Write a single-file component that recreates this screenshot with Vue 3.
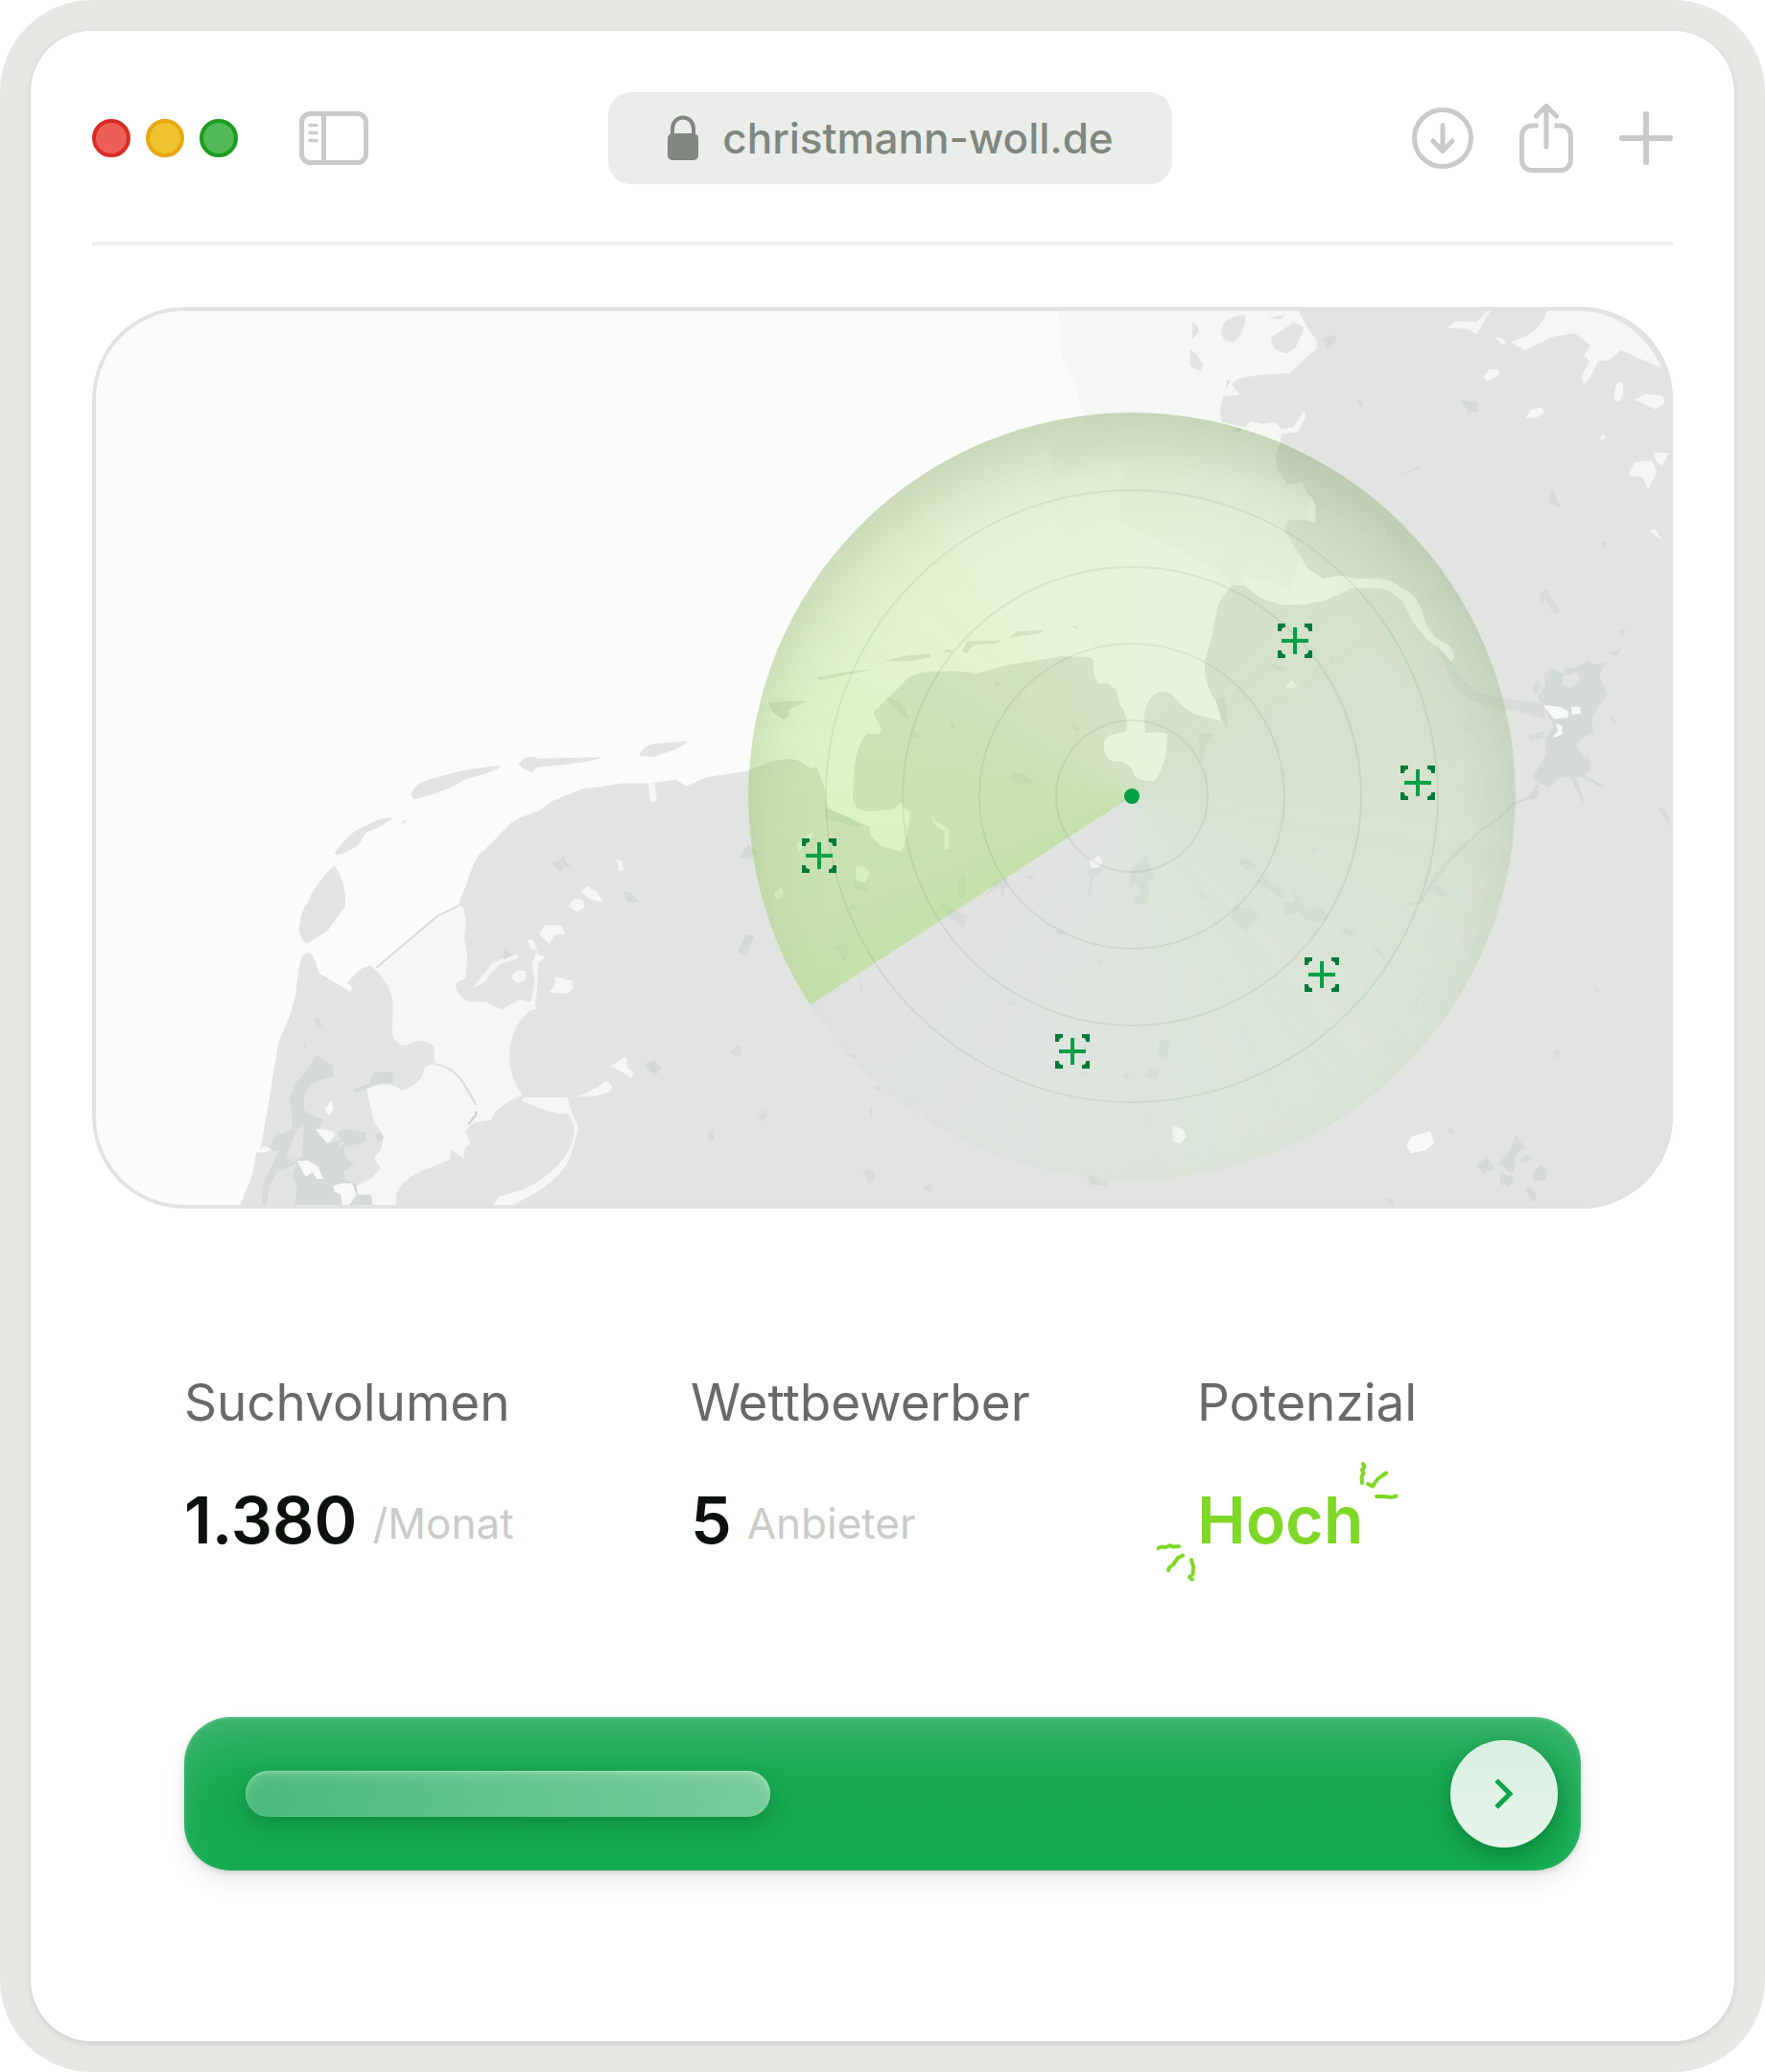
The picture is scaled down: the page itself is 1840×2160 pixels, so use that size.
<script setup>
import { ref } from 'vue'

const address = ref('christmann-woll.de')

const lights = [
    { name: 'Schließen', color: 'red' },
    { name: 'Minimieren', color: 'yellow' },
    { name: 'Maximieren', color: 'green' }
]

const rings = [80, 160, 240, 320]

const competitors = [
    { x: 854, y: 892 },
    { x: 1118, y: 1096 },
    { x: 1350, y: 668 },
    { x: 1478, y: 816 },
    { x: 1378, y: 1016 }
]

const stats = [
    { label: 'Suchvolumen', value: '1.380', unit: '/Monat' },
    { label: 'Wettbewerber', value: '5', unit: 'Anbieter' },
    { label: 'Potenzial', value: 'Hoch', highlight: true }
]
</script>

<template>
    <div class="frame">
        <main class="window">
            <header class="toolbar">
                <div class="toolbar-left">
                    <div class="lights">
                        <button v-for="light in lights" :key="light.color" type="button" class="light"
                            :class="light.color" :aria-label="light.name"></button>
                    </div>
                    <button type="button" class="tool" aria-label="Seitenleiste">
                        <svg width="72" height="56" viewBox="0 0 72 56" fill="none" stroke="currentColor"
                            stroke-width="5">
                            <rect x="2.5" y="2.5" width="67" height="51" rx="9" />
                            <path d="M25.5 3v50" />
                            <path d="M11 14.5h7M11 22.5h7M11 30.5h7" stroke-width="3.5" stroke-linecap="round" />
                        </svg>
                    </button>
                </div>

                <label class="address">
                    <svg width="34" height="48" viewBox="0 0 34 48" aria-hidden="true">
                        <path d="M6 21V14a11 11.5 0 0 1 22 0v7" fill="none" stroke="currentColor" stroke-width="4" />
                        <rect x="1" y="19" width="32" height="28" rx="5" fill="currentColor" />
                    </svg>
                    <input v-model="address" type="text" aria-label="Adresse" spellcheck="false">
                </label>

                <div class="tools">
                    <button type="button" class="tool" aria-label="Downloads">
                        <svg width="64" height="64" viewBox="0 0 64 64" fill="none" stroke="currentColor"
                            stroke-width="5" stroke-linecap="round" stroke-linejoin="round">
                            <circle cx="32" cy="32" r="29.5" />
                            <path d="M32 18.5V45M22 35l10 10.500L42 35" />
                        </svg>
                    </button>
                    <button type="button" class="tool" aria-label="Teilen">
                        <svg width="56" height="72" viewBox="0 0 56 72" fill="none" stroke="currentColor"
                            stroke-width="5" stroke-linejoin="round">
                            <path d="M19.5 23H13a10.500 10.500 0 0 0-10.500 10.500V59A10.500 10.500 0 0 0 13 69.500h30A10.500 10.500 0 0 0 53.500 59V33.500A10.500 10.500 0 0 0 43 23h-6.500" />
                            <path d="M28 4v41M17.500 13L28 2.500 38.500 13" stroke-linecap="round" />
                        </svg>
                    </button>
                    <button type="button" class="tool" aria-label="Neuer Tab">
                        <svg width="56" height="56" viewBox="0 0 56 56" fill="none" stroke="currentColor"
                            stroke-width="6" stroke-linecap="round">
                            <path d="M28 3v50M3 28h50" />
                        </svg>
                    </button>
                </div>
            </header>

            <section class="map" aria-label="Karte">
                <svg class="map-canvas" viewBox="96 320 1648 940">
                    <rect class="sea" x="96" y="320" width="1648" height="940" />

                    <!-- coastal water, mainland -->
                    <g transform="translate(760 400) scale(0.333333)">
                        <path class="water"
                            d="M1032-250L1038-90 1077-10 1110 100 1130 170 1040 182 1000 210 1010 270 1060 295 1140 240 1250 250 1220 320 1225 430 1300 470 1390 510 1500 570 1760 640 1950-250Z" />
                        <path class="land"
                            d="M-20 1225L60 1212Q140 1173 195 1173 225 1178 255 1203L275 1200 300 1270 305 1315Q330 1355 375 1357L440 1385 443 1415 475 1445 540 1465 557 1410 568 1340 553 1336 540 1308 515 1332 430 1337Q387 1330 387 1290L392 1200Q400 1130 430 1095L470 1095 477 1080 450 1030 500 980 560 920Q590 900 640 900 740 896 770 908L870 880 1040 853 1130 855 1140 870V905L1155 940 1180 935Q1205 945 1215 970L1222 1005 1232 1015Q1248 1050 1242 1087L1190 1100Q1170 1110 1172 1140 1180 1170 1195 1180L1230 1183Q1265 1200 1267 1225 1285 1247 1330 1242 1372 1190 1370 1095 1340 1085 1302 1093L1298 1040Q1310 965 1360 962 1390 965 1405 995 1440 1035 1500 1045L1540 1055 1548 1045Q1540 1010 1510 975 1480 910 1490 860L1508 800 1529 690 1571 630H1610L1663 670 1728 692 1806 690 1871 675 1949 640H2040Q2080 650 2105 680L2137 740 2183 800 2241 845 2254 875 2270 855 2254 820 2209 795 2183 760 2163 700Q2140 650 2105 640 2060 608 2033 610L1968 610 1910 600 1858 610 1812 580 1741 465 1734 445 1754 427H1806L1834 435V370L1806 340 1793 310 1747 315 1715 270 1708 230 1721 180V155L1610 135 1565 125 1541 120 1536 80 1545 40 1597 35 1571 0 1597-17 1663-28 1754-33 1793-70 1838-110V-135L1812-170 1793-205 1767-250H2960V2600H-20Z" />
                        <path class="land"
                            d="M122 997Q200 990 245 993L215 1005 185 1020 188 1042 170 1050 140 1030ZM272 918L380 899 455 893 380 908 285 928ZM483 867L560 850 632 844 630 856 560 868ZM665 838L690 830 700 842ZM730 835L745 805 850 803 840 812 765 817 742 845ZM876 795L900 775 984 770 975 780ZM1068 760L1090 758 1092 768Z" />
                        <path class="water"
                            d="M628 1342L645 1365 688 1392V1455L675 1458 673 1400 640 1378ZM245 1412L265 1395 258 1420 215 1465 212 1440ZM395 1510L430 1512 440 1530 425 1562 398 1550ZM140 1595L165 1572 172 1600 150 1613Z" />
                        <path class="town"
                            d="M490 980Q545 985 565 1050 525 1035 490 980ZM570 1085L600 1105 580 1112ZM690 1060L708 1070 698 1085ZM828 930L848 935 838 948ZM1068 1062L1100 1080 1085 1085ZM875 1232Q915 1200 955 1250L905 1250ZM300 1325L375 1357 412 1380 395 1387 300 1360ZM1475 1095L1515 1095 1490 1130 1478 1190ZM1520 985L1552 980 1560 1080 1540 1050Z" />
                    </g>

                    <!-- western coast, lakes and islands -->
                    <g transform="translate(80 700) scale(0.459184 0.369898)">
                        <path class="water" d="M680 842L820 690 865 660 900 700 1000 900 1060 950 1020 1250 900 1568H630L600 1150Z" />
                        <path class="land"
                            d="M350 1568L398 1420 407 1360 418 1340 438 1200 458 1045 484 970 497 910 505 830Q510 792 528 792 540 800 550 850L605 890 622 903 625 890 613 878 645 838 665 828 680 842Q718 895 718 940L716 1020Q725 1055 745 1055L775 1040Q812 1045 812 1065V1105L790 1115Q785 1165 737 1180 710 1150 658 1175L675 1270 697 1310 690 1350 675 1370 690 1400 668 1430 635 1450 640 1568Z" />
                        <path class="land"
                            d="M865 660L885 600Q900 540 912 518L940 485 985 428 1000 415 1050 392 1080 365 1150 330 1180 327 1240 315H1300L1360 305 1384 323 1430 298 1525 280 1568 262V1568H725V1480Q728 1440 780 1410L848 1375 850 1345 878 1375 882 1340 893 1330 883 1295 900 1272 940 1265Q945 1230 1012 1193 980 1140 982 1080 985 1000 1030 955L1048 950 1030 932 1005 925 965 952 930 932 885 930Q850 895 865 873L883 865 887 800 880 750 884 710 878 665Z" />
                        <path class="land"
                            d="M760 350Q760 320 800 305 870 275 963 265 960 280 880 305 840 340 765 360ZM1003 260Q1025 230 1045 245L1190 241Q1180 255 1045 270L1035 285Q1010 275 1003 260ZM1277 238Q1285 205 1320 202L1385 197Q1385 212 1310 240ZM585 512Q620 450 655 435 690 410 718 412 705 430 655 455 640 505 590 518ZM584 546Q612 590 610 660L570 730 522 768Q500 745 506 715 510 670 525 650 535 610 584 546ZM735 430L745 418 748 427Z" />
                        <path class="dike" d="M680 835L820 688 865 662M812 1106Q860 1115 885 1175L907 1222" />
                        <path class="dike dark" d="M907 1240L905 1252 889 1276" />
                        <path class="water"
                            d="M1010 1210L1015 1200H1113L1125 1245 1140 1285 1120 1370Q1095 1440 1010 1490L995 1503H945L960 1478Q1030 1465 1085 1400 1128 1350 1130 1285L1115 1245 1095 1247Q1050 1235 1010 1210ZM1297 312L1312 312 1317 365 1303 368ZM1226 530L1238 535 1242 560 1230 562ZM1145 620L1158 604 1180 620 1195 650 1165 642ZM1117 660L1130 640 1150 645 1152 665 1135 678ZM1050 740L1062 715 1100 715 1110 740 1085 742 1073 768ZM1023 755L1035 755 1048 788 1030 782ZM900 890L945 820 1000 795 1002 808 960 825 920 880ZM985 860L1000 842 1020 845 1018 868 1000 880ZM1033 825L1042 795 1065 805 1048 820 1045 900 1040 945 1030 935 1040 870ZM1072 905L1085 885 1085 860 1125 872 1128 890 1115 908ZM1212 1112L1248 1085 1250 1115 1265 1130 1258 1148 1240 1130ZM1137 1198L1185 1170 1200 1155Q1225 1165 1210 1185 1180 1200 1137 1198Z" />
                        <path class="town"
                            d="M545 1080L580 1110 583 1140 555 1150 530 1165 515 1200 515 1235 540 1255 560 1262 545 1300 570 1330 600 1320 590 1300 610 1290 658 1300 655 1325 628 1335 605 1340 610 1370 630 1390 605 1410 610 1430 635 1445 640 1505H495L500 1455 482 1440 478 1400 455 1410 440 1440 430 1505H420L425 1440 460 1350 435 1350 450 1310 490 1290 488 1240 483 1200 498 1160 520 1125ZM628 1178L665 1160 675 1128 715 1130 720 1160 690 1160 635 1187ZM675 1305L690 1298 696 1315 685 1328ZM540 978L550 975 556 1000 546 1002ZM512 1065L520 1042 522 1055ZM637 1475H668L672 1505H640ZM1078 540L1100 530 1105 515 1110 535 1122 550 1105 553 1098 565ZM1240 620L1258 625 1280 650 1250 650ZM970 785L992 798 970 812ZM1505 525L1525 485 1545 510 1530 530ZM1500 790L1520 740 1538 745 1520 800ZM1483 1075L1500 1052 1508 1080ZM1290 1105L1312 1095 1328 1120 1310 1142ZM1432 1300L1442 1295 1447 1315 1437 1322ZM1548 1250L1565 1235 1567 1255 1555 1268Z" />
                        <path class="land" d="M500 1290L515 1278 512 1365 490 1380 475 1365ZM500 1385L490 1420 500 1455 482 1440 480 1400ZM600 1325L610 1328 590 1352Z" />
                        <path class="white"
                            d="M563 1235L578 1208 583 1235 572 1252ZM543 1288L580 1295 588 1305 570 1330 555 1310ZM500 1380L525 1378 548 1395 560 1430 545 1430 535 1410 520 1425ZM582 1450L600 1442H625L635 1475 618 1505 603 1503 600 1475 585 1465ZM405 1355L425 1338 443 1345 430 1355Z" />
                    </g>

                    <!-- north sea coast and the east -->
                    <g transform="translate(1080 310) scale(0.433673 0.333333)">
                        <path class="water"
                            d="M1230 42H1330Q1450 70 1505 222L1405 165 1380 195 1350 200 1340 235 1318 272 1310 250 1330 200 1318 180 1333 150 1295 112 1245 122 1175 165 1140 140 1180 120Q1215 95 1230 42ZM988 95L1005 75 1060 77 1085 42H1092L1060 115 1035 98ZM1103 122L1125 130 1130 150 1115 143ZM1075 250L1090 225 1112 225 1112 245 1085 264ZM1395 270L1410 263 1412 300 1402 326 1388 318ZM1440 320L1465 302 1508 308 1510 330 1490 350ZM1177 376L1190 350 1215 344 1222 360 1200 378ZM1354 445L1360 428 1370 432 1365 445ZM1485 485L1522 487 1505 528 1490 510ZM1425 550L1440 515 1480 510 1492 545 1472 600 1458 562 1430 558ZM1473 728L1490 725 1505 760ZM500 410L515 388 545 395 575 390 590 412 620 405 645 352 648 375 630 420 590 428 586 465 540 435ZM440 850L480 855 505 895 470 900ZM598 1220L615 1198 630 1215 610 1225Z" />
                        <path class="land"
                            d="M375 78Q392 85 390 110L376 132ZM445 105Q450 60 503 55 505 110 475 140 445 135 445 105ZM370 163L388 180 402 210 395 232 370 215ZM565 125L620 78 645 95 625 155 605 175Q565 170 565 125ZM558 65L600 52 590 70Z" />
                        <path class="town dim"
                            d="M687 125L720 118 722 135 700 158ZM770 322L788 325 782 347ZM872 560L920 525 918 537ZM1212 925L1230 912 1240 940 1262 985 1245 990 1222 945 1215 968ZM660 615L680 622 672 650ZM845 725L853 730 848 758ZM1355 765L1372 762 1368 785ZM1402 1040L1420 1042 1412 1058ZM1375 1112L1410 1095 1395 1125ZM1378 1310L1395 1325 1390 1342ZM555 1140L600 1160 590 1172ZM706 1115L718 1130 708 1142ZM1025 1345L1042 1342 1038 1360ZM1180 1370L1222 1355 1220 1375 1190 1392ZM960 1085L1005 1150Q1040 1240 1110 1250L1220 1270 1225 1320 1150 1290Q1050 1290 1000 1205ZM1192 1225L1205 1198 1215 1220 1200 1245ZM475 415L495 408 490 420ZM455 290L460 260 468 258Z" />
                        <path class="town"
                            d="M1020 322L1062 328 1065 358 1042 362 1038 378 1036 350ZM1242 595L1262 662 1232 640ZM1220 1180L1245 1162 1270 1178 1268 1160 1300 1158 1325 1135 1345 1150 1370 1140 1353 1185 1375 1240 1355 1275 1335 1315 1340 1360 1310 1365 1295 1400 1330 1455 1320 1500H1195L1235 1410 1225 1380 1245 1340 1225 1290 1205 1250 1225 1215Z" />
                        <path class="land" d="M1268 1185L1300 1172 1308 1195 1285 1222 1265 1210Z" />
                        <path class="white" d="M1218 1275L1260 1280 1280 1295 1278 1315 1245 1318ZM1287 1280H1308L1310 1302 1288 1305ZM1250 1332L1265 1340V1380L1242 1375 1255 1355Z" />
                    </g>

                    <!-- southern towns and rivers -->
                    <g transform="translate(1200 760) scale(0.357143 0.333333)">
                        <path class="town"
                            d="M1150 40L1225 5 1290 5 1232 55 1245 95 1265 100 1275 78 1285 130 1260 140 1325 180 1318 182 1238 142 1266 235 1258 225 1222 150 1195 152 1160 182 1135 170 1113 150 1155 100ZM1095 215L1125 185 1135 205 1115 220ZM1063 1268L1092 1310 1065 1330 1060 1380 1045 1388 1015 1355 1050 1318ZM947 1365L980 1342 1003 1375 970 1390ZM1075 1350L1095 1332 1115 1343 1090 1357ZM1018 1385L1060 1405 1045 1430 1020 1425ZM1115 1385L1140 1362 1158 1385 1150 1410 1118 1415ZM1090 1440L1105 1432 1125 1455 1118 1482Z" />
                        <path class="river" d="M1130 175L1105 215 1060 232 1020 275 965 315 900 380 840 445 820 480 785 545" />
                        <path class="town dim"
                            d="M1480 245L1498 248 1515 280 1512 308ZM1293 798L1310 822 1300 826ZM1172 1015L1185 1000 1197 1018 1185 1030ZM860 1240L885 1255 878 1275ZM685 1472L700 1467 710 1485 695 1490ZM467 362L480 372 476 392ZM255 405L290 410 313 430 285 442 260 425ZM305 478L330 465 350 485 385 505 388 535 355 510ZM420 508L445 540 440 560 500 560 515 595 485 603 455 600 430 570 390 585 385 540 415 540ZM243 555L300 565 315 600 285 615 280 632 260 620 235 605ZM550 620L598 635 580 652ZM642 682L665 685 685 722ZM138 508L155 510 172 538 150 530ZM800 490L840 490 860 523 835 518ZM743 555L755 535 785 545ZM770 835L778 840 775 868ZM25 970L55 980 45 1035 20 1030ZM0 1070L15 1055 25 1065 15 1092ZM140 20L182 15 155 60 145 110ZM850 430L858 440 830 480 820 470Z" />
                        <path class="white" d="M745 1305L760 1275 815 1258 827 1295 800 1318 760 1327ZM62 1240L95 1252 103 1275 85 1296 63 1290Z" />
                    </g>
                    <g transform="translate(760 760) scale(0.333333)">
                        <path class="town dim"
                            d="M1305 395L1332 475 1310 465 1315 500 1305 545 1270 545 1265 525 1290 515 1275 480 1250 500 1255 440ZM1120 435L1175 435 1140 465 1135 515 1118 530 1128 470ZM925 460L960 455 940 475ZM1020 630L1050 632 1035 648ZM1147 710L1172 735 1160 740ZM865 850L910 855 890 868ZM800 525L830 475 870 465 855 540 845 490ZM655 540L745 585 735 625 690 590ZM735 452L740 520 722 535 715 480ZM325 680L370 670 377 700 360 728ZM355 575L400 540 395 560ZM390 475L435 485 430 510 395 500ZM405 770L418 800 410 835ZM365 1015L395 1015 400 1035ZM452 1118L470 1110 475 1122 462 1132ZM440 1180L452 1200 442 1215ZM93 1210L117 1190 108 1227ZM5 1010L35 990 40 1015 20 1028ZM417 1385L440 1372 457 1395 440 1425ZM605 1435L635 1420 630 1450ZM1115 1390L1190 1415 1180 1428 1130 1425ZM1090 1080L1115 1068 1125 1080 1105 1090ZM1230 1080L1245 1070 1255 1088 1240 1095ZM1297 1088L1320 1062 1350 1065 1335 1092ZM568 5L600 20 585 30Z" />
                        <path class="white" d="M1125 410L1145 405 1155 395 1168 412 1160 430 1135 435Z" />
                    </g>

                    <!-- radar -->
                    <foreignObject x="780" y="430" width="800" height="800">
                        <div class="sweep"></div>
                    </foreignObject>
                    <circle v-for="r in rings" :key="r" class="ring" cx="1180" cy="830" :r="r - 1" />
                    <circle class="origin" cx="1180" cy="830" r="8" />

                    <g v-for="(spot, i) in competitors" :key="i" :transform="`translate(${spot.x} ${spot.y})`">
                        <path class="bracket"
                            d="M-18-10V-18H-10V-14H-12L-14-12V-10ZM10-18H18V-10H14V-12L12-14H10ZM18 10V18H10V14H12L14 12V10ZM-10 18H-18V10H-14V12L-12 14H-10Z" />
                        <path class="cross" d="M-2-14H2V-2H14V2H2V14H-2V2H-14V-2H-2Z" />
                    </g>
                </svg>
            </section>

            <section class="details">
                <dl class="stats">
                    <div v-for="stat in stats" :key="stat.label" class="stat">
                        <dt>{{ stat.label }}</dt>
                        <dd>
                            <strong :class="{ highlight: stat.highlight }">
                                {{ stat.value }}
                                <template v-if="stat.highlight">
                                    <svg class="spark top" width="40" height="40" viewBox="0 0 40 40" aria-hidden="true">
                                        <path d="M4 2L5.500 5 3 8.500 4.500 12 2.500 15 3 22M9 23L14 25.500 19 18 23 15 28 11.500M18 36L26 36 33 37 39 35.500" />
                                    </svg>
                                    <svg class="spark bottom" width="40" height="40" viewBox="0 0 40 40" aria-hidden="true">
                                        <path d="M1 6L5 4.500 9 5 14 3 17 4.500 23 4M27 13.500L22 16 17 23 13 26 12 29M36 18L38 25 37.500 33 34 36 37 39" />
                                    </svg>
                                </template>
                            </strong>
                            <span v-if="stat.unit">{{ stat.unit }}</span>
                        </dd>
                    </div>
                </dl>

                <button type="button" class="cta" aria-label="Weiter">
                    <span class="cta-bar"></span>
                    <span class="cta-arrow">
                        <svg width="24" height="36" viewBox="0 0 24 36" fill="none" stroke="currentColor"
                            stroke-width="5">
                            <path d="M4 4l14 14L4 32" />
                        </svg>
                    </span>
                </button>
            </section>
        </main>
    </div>
</template>

<style>
body {
    margin: 0;
    background: #fff;
}
</style>

<style scoped>
.frame {
    box-sizing: border-box;
    min-height: 100vh;
    padding: 32px;
    display: flex;
    border-radius: 96px;
    background: #e6e9e3;
    font-family: Inter, "Liberation Sans", sans-serif;
}

.window {
    flex: 1;
    min-width: 0;
    padding: 64px;
    border-radius: 64px;
    background: #fff;
    box-shadow: 0 2px 6px rgba(0, 0, 0, .12);
}

button {
    padding: 0;
    border: 0;
    background: none;
    font: inherit;
    cursor: pointer;
}

svg {
    display: block;
}

.toolbar {
    display: flex;
    align-items: center;
    justify-content: space-between;
    padding-bottom: 60px;
    border-bottom: 4px solid #eee;
}

.toolbar-left {
    display: flex;
    align-items: center;
    gap: 64px;
}

.lights {
    display: flex;
    gap: 16px;
}

.light {
    box-sizing: border-box;
    width: 40px;
    height: 40px;
    border: 4px solid;
    border-radius: 50%;
}

.red {
    background: #ec5f57;
    border-color: #d92b26;
}

.yellow {
    background: #efc22f;
    border-color: #e8a70c;
}

.green {
    background: #51b956;
    border-color: #1d9c20;
}

.tool {
    color: #c9cbc9;
}

.address {
    box-sizing: border-box;
    width: 588px;
    height: 96px;
    display: flex;
    align-items: center;
    justify-content: center;
    gap: 24px;
    border-radius: 24px;
    background: #eaedea;
    color: #7f877f;
}

.address input {
    field-sizing: content;
    min-width: 0;
    padding: 0;
    border: 0;
    outline: 0;
    background: none;
    color: inherit;
    font: 500 44px/56px Inter, "Liberation Sans", sans-serif;
}

.tools {
    display: flex;
    align-items: center;
    gap: 48px;
}

.map {
    position: relative;
    margin-top: 64px;
    border-radius: 96px;
    overflow: hidden;
}

.map::after {
    content: "";
    position: absolute;
    inset: 0;
    border: 4px solid #e1e3e1;
    border-radius: 96px;
}

.map-canvas {
    width: 100%;
    height: auto;
}

.sea {
    fill: #fafbfa;
}

.water {
    fill: #f4f7f4;
}

.white {
    fill: #f8faf8;
}

.land {
    fill: #e1e4e1;
}

.town {
    fill: #d4dad7;
}

.town.dim {
    fill: #d7dcd9;
}

.dike,
.river {
    fill: none;
    stroke: #d9dcda;
    stroke-width: 5;
}

.dike.dark {
    stroke: #cdd0ce;
}

.river {
    stroke: #d3d9d6;
    stroke-width: 7;
}

.sweep {
    width: 800px;
    height: 800px;
    border-radius: 50%;
    background: conic-gradient(from 237deg, rgba(132, 220, 38, .28), rgba(160, 225, 90, .23) 25%, rgba(175, 220, 130, .24) 45%, rgba(190, 220, 160, .26) 60%, rgba(200, 230, 190, .28) 75%, rgba(208, 228, 208, .24) 88%, rgba(215, 215, 225, .2));
    box-shadow: inset 0 48px 88px -20px rgba(80, 100, 60, .26);
    mask: conic-gradient(from 237deg, #000 60%, rgba(0, 0, 0, .8) 85%, rgba(0, 0, 0, .4));
}

.ring {
    fill: none;
    stroke: rgba(60, 90, 60, .09);
    stroke-width: 2;
}

.origin,
.cross {
    fill: #00a046;
}

.bracket {
    fill: #007a3a;
}

.details {
    padding: 172px 96px 0;
}

.stats {
    display: grid;
    grid-template-columns: repeat(3, 1fr);
    gap: 128px;
    margin: 0;
}

dt {
    color: #676b68;
    font-size: 53px;
    line-height: 60px;
}

dd {
    display: flex;
    align-items: center;
    gap: 16px;
    margin: 52px 0 0;
    line-height: 80px;
}

dd strong {
    position: relative;
    color: #0a120b;
    font-size: 68px;
    font-weight: 600;
}

dd span {
    padding-top: 8px;
    color: #c9cbc9;
    font-size: 44px;
    line-height: 72px;
}

dd .highlight {
    color: #7fd726;
}

.spark {
    position: absolute;
    fill: none;
    stroke: currentColor;
    stroke-width: 4;
    stroke-linecap: round;
    stroke-linejoin: round;
}

.spark.top {
    top: -20px;
    right: -36px;
}

.spark.bottom {
    bottom: -24px;
    left: -42px;
}

.cta {
    box-sizing: border-box;
    width: 100%;
    height: 160px;
    margin-top: 166px;
    padding: 0 24px 0 64px;
    display: flex;
    align-items: center;
    justify-content: space-between;
    border-radius: 48px;
    background: linear-gradient(#20ac5a, #16a951 55%, #12ab50);
    box-shadow: inset 0 24px 48px -8px rgba(255, 255, 255, .16), inset 0 1px 4px rgba(255, 255, 255, .2), 0 12px 24px rgba(0, 0, 0, .08), 0 2px 6px rgba(0, 0, 0, .12);
}

.cta-bar {
    width: 40%;
    height: 48px;
    border-radius: 24px;
    background: linear-gradient(90deg, #4abb7b, #77cd9a);
    box-shadow: inset 0 8px 16px -4px rgba(255, 255, 255, .22), inset 0 1px 3px rgba(255, 255, 255, .35), 0 8px 20px rgba(0, 60, 20, .26);
}

.cta-arrow {
    width: 112px;
    height: 112px;
    display: flex;
    align-items: center;
    justify-content: center;
    border-radius: 50%;
    background: linear-gradient(#d9f0e2, #e6f5ea);
    color: #0ea44c;
    box-shadow: 0 8px 20px rgba(0, 60, 20, .34);
}
</style>
